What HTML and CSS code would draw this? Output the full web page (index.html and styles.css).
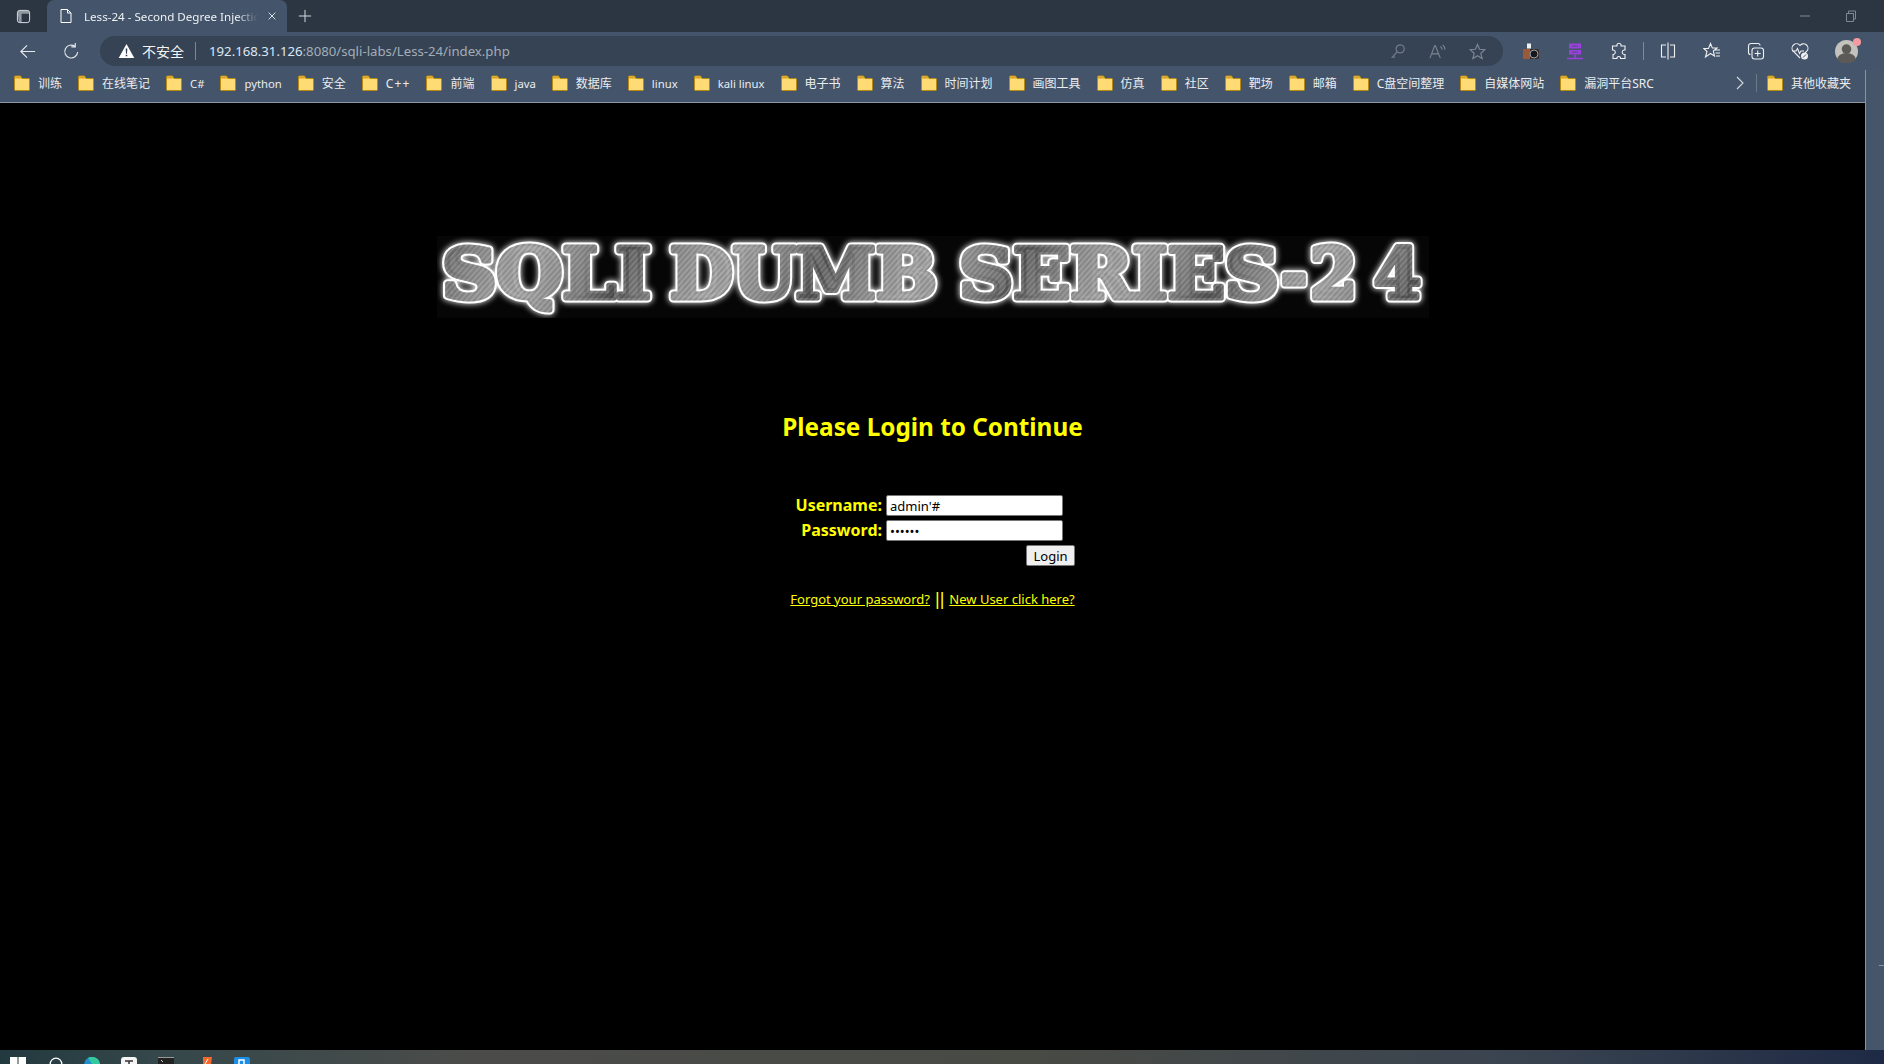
FILE: index.html
```html
<!DOCTYPE html>
<html lang="zh">
<head>
<meta charset="utf-8">
<title>Less-24 - Second Degree Injections</title>
<link rel="stylesheet" href="styles.css">
</head>
<body>
<svg class="defs" width="0" height="0" aria-hidden="true">
  <symbol id="folder" viewBox="0 0 16 16">
    <path d="M.5 3V14.5a1 1 0 0 0 1 1h13a1 1 0 0 0 1-1V4.5a1 1 0 0 0-1-1H8L6.5 1H1.500a1 1 0 0 0-1 1z" fill="#ffdb76" stroke="#b98a12"/>
    <path d="M1 1.500H6.300L7.500 3.500H1z" fill="#d9a520"/>
  </symbol>
  <pattern id="hatch" width="4" height="4" patternUnits="userSpaceOnUse" patternTransform="rotate(-48)">
    <rect width="4" height="4" fill="#8e8e8e"/>
    <rect width="4" height="1" fill="#a2a2a2"/>
    <rect y="2" width="4" height="1" fill="#7c7c7c"/>
  </pattern>
  <linearGradient id="shade" gradientUnits="userSpaceOnUse" x1="0" y1="0" x2="85" y2="35" spreadMethod="reflect">
    <stop offset="0" stop-color="#000" stop-opacity=".25"/>
    <stop offset="1" stop-color="#fff" stop-opacity=".12"/>
  </linearGradient>
</svg>
<div class="tabstrip">
  <svg class="ico sidebar-ico" viewBox="0 0 16 16"><rect x="1.500" y="1.500" width="13" height="13" rx="2.500" fill="none" stroke="#e4e8ec"/><path d="M2 2H14V5H2zM2 5H6V14H3z" fill="#c5ccd3" opacity=".65"/></svg>
  <div class="tab">
    <svg class="ico" viewBox="0 0 16 16"><path d="M3 1.500H9.500L13 5V14.500H3zM9.500 1.500V5H13" fill="none" stroke="#fff"/></svg>
    <span class="tab-title">Less-24 - Second Degree Injections</span>
    <svg class="ico tab-x" viewBox="0 0 16 16"><path d="M3.500 3.500L12.500 12.500M12.500 3.500L3.500 12.500" stroke="#f0f2f4" stroke-width="1.200"/></svg>
  </div>
  <svg class="ico plus" viewBox="0 0 16 16"><path d="M8 1V15M1 8H15" stroke="#d9dde2" stroke-width="1.100"/></svg>
  <div class="winctl">
    <svg class="ico" viewBox="0 0 16 16"><path d="M3 8H13" stroke="#7d8895"/></svg>
    <svg class="ico" viewBox="0 0 16 16"><path d="M3.500 5.500H10.500V13.500H3.500zM5.500 5.500V3H12.500V11H10.500" fill="none" stroke="#7d8895"/></svg>
  </div>
</div>
<div class="toolbar">
  <svg class="ico nav back" viewBox="0 0 20 20"><path d="M18 10H3M9.500 3.500L3 10L9.500 16.500" fill="none" stroke="#e6e9ec" stroke-width="1.200"/></svg>
  <svg class="ico nav reload" viewBox="0 0 20 20"><path d="M16.500 10.500A6.800 6.800 0 1 1 13.800 4.600M14 1V5.200H9.800" fill="none" stroke="#e6e9ec" stroke-width="1.200"/></svg>
  <div class="omnibox">
    <svg class="ico warn" viewBox="0 0 16 16"><path d="M8 1L15.800 15H.2z" fill="#fff"/><path d="M7.200 5.500H8.800L8.500 10.700H7.500zM7.200 11.700H8.800V13.300H7.200z" fill="#2f3b4a"/></svg>
    <span class="insecure">不安全</span>
    <span class="omni-sep"></span>
    <span class="url"><span class="host">192.168.31.126</span>:8080/sqli-labs/Less-24/index.php</span>
    <svg class="ico dim" viewBox="0 0 16 16"><circle cx="10.500" cy="5.500" r="3.800" fill="none" stroke="#6f7b88" stroke-width="1.200"/><path d="M7.800 8.200L2.500 14M4 12.500L5.500 14" fill="none" stroke="#6f7b88" stroke-width="1.200"/></svg>
    <svg class="ico dim" viewBox="0 0 18 16"><path d="M1 15L6 2H6.800L12 15M3 10.500H10M12 2.500A5 5 0 0 1 14 6M14.500 1A7 7 0 0 1 17 6" fill="none" stroke="#7d8894" stroke-width="1.100"/></svg>
    <svg class="ico dim" viewBox="0 0 18 18"><path d="M9 1.500L11.200 6.700L16.800 7.200L12.500 10.900L13.900 16.500L9 13.500L4.100 16.500L5.500 10.900L1.200 7.200L6.800 6.700z" fill="none" stroke="#7d8894" stroke-width="1.200"/></svg>
  </div>
  <div class="tools">
    <svg class="ico" viewBox="0 0 18 18"><rect x="1" y="7" width="16" height="10" rx="1.500" fill="#3b2a23"/><rect x="1" y="7" width="7" height="10" fill="#9a5a3a"/><circle cx="12" cy="12" r="4" fill="#14181c" stroke="#9aa3ab"/><path d="M5 6.500V1.500H9V6.500z" fill="#eef0f2"/></svg>
    <svg class="ico" viewBox="0 0 18 18"><path d="M3 1.500H15V6.500H3zM3 8H15V12.500H3z" fill="#9b3fe0"/><path d="M1 16.500H17M9 12.500V16.500" stroke="#9b3fe0" stroke-width="1.500"/><path d="M6 4H12M6 10H12" stroke="#45566b"/></svg>
    <svg class="ico" viewBox="0 0 18 18"><path d="M7 2.500A2.200 2.200 0 0 1 11 2.500V4H15V8H14A2.300 2.300 0 0 0 14 12.500H15V16.500H10.500V15.500A2 2 0 0 0 7 15.500V16.500H3V12.500H3.500A2.300 2.300 0 0 0 3.500 8H2.500V4H7z" fill="none" stroke="#eef0f2" stroke-width="1.100"/></svg>
    <span class="tool-sep"></span>
    <svg class="ico" viewBox="0 0 18 18"><path d="M9 .5V17.500M7 3H2.500V15H7M11 3H15.500V15H11" fill="none" stroke="#eef0f2" stroke-width="1.100"/></svg>
    <svg class="ico" viewBox="0 0 18 18"><path d="M7.500 1.500L9.300 6H14L10.300 9L11.500 14L7.500 11.500L2.500 15L4 9.500L.8 6.500H5.500zM12 8H17M12.500 11H17M13 14H17" fill="none" stroke="#eef0f2" stroke-width="1.100"/></svg>
    <svg class="ico" viewBox="0 0 18 18"><path d="M3.500 12.500A2 2 0 0 1 1.500 10.500V4A2.500 2.500 0 0 1 4 1.500H11A2 2 0 0 1 13 3.500" fill="none" stroke="#eef0f2" stroke-width="1.100"/><rect x="5" y="6" width="11.500" height="11" rx="2.500" fill="none" stroke="#eef0f2" stroke-width="1.100"/><path d="M10.700 8.500V14.500M7.700 11.500H13.700" stroke="#eef0f2" stroke-width="1.100"/></svg>
    <svg class="ico" viewBox="0 0 18 18"><path d="M9 16L2 9A4.200 4.200 0 0 1 9 3.500A4.200 4.200 0 0 1 16 9L14 11M1 9H5L6.500 6.500L8.500 11.500L10 9H13" fill="none" stroke="#eef0f2" stroke-width="1.100"/><circle cx="13.500" cy="14" r="3.500" fill="#eef0f2"/><path d="M12 15.500L15 12.500" stroke="#45566b"/></svg>
    <div class="avatar"><svg viewBox="0 0 24 24"><circle cx="12" cy="12" r="12" fill="#c4c2bd"/><circle cx="12" cy="9.500" r="5" fill="#5c5a57"/><path d="M2.500 20A9.500 6.500 0 0 1 21.500 20A12 12 0 0 1 2.500 20z" fill="#5c5a57"/></svg><span class="dot"></span></div>
  </div>
</div>
<div class="bookmarks">
  <a class="bm"><svg class="folder"><use href="#folder"/></svg>训练</a>
  <a class="bm"><svg class="folder"><use href="#folder"/></svg>在线笔记</a>
  <a class="bm lat"><svg class="folder"><use href="#folder"/></svg>C#</a>
  <a class="bm lat"><svg class="folder"><use href="#folder"/></svg>python</a>
  <a class="bm"><svg class="folder"><use href="#folder"/></svg>安全</a>
  <a class="bm wide"><svg class="folder"><use href="#folder"/></svg>C++</a>
  <a class="bm"><svg class="folder"><use href="#folder"/></svg>前端</a>
  <a class="bm lat"><svg class="folder"><use href="#folder"/></svg>java</a>
  <a class="bm"><svg class="folder"><use href="#folder"/></svg>数据库</a>
  <a class="bm lat"><svg class="folder"><use href="#folder"/></svg>linux</a>
  <a class="bm lat"><svg class="folder"><use href="#folder"/></svg>kali linux</a>
  <a class="bm"><svg class="folder"><use href="#folder"/></svg>电子书</a>
  <a class="bm"><svg class="folder"><use href="#folder"/></svg>算法</a>
  <a class="bm"><svg class="folder"><use href="#folder"/></svg>时间计划</a>
  <a class="bm"><svg class="folder"><use href="#folder"/></svg>画图工具</a>
  <a class="bm"><svg class="folder"><use href="#folder"/></svg>仿真</a>
  <a class="bm"><svg class="folder"><use href="#folder"/></svg>社区</a>
  <a class="bm"><svg class="folder"><use href="#folder"/></svg>靶场</a>
  <a class="bm"><svg class="folder"><use href="#folder"/></svg>邮箱</a>
  <a class="bm"><svg class="folder"><use href="#folder"/></svg>C盘空间整理</a>
  <a class="bm"><svg class="folder"><use href="#folder"/></svg>自媒体网站</a>
  <a class="bm"><svg class="folder"><use href="#folder"/></svg>漏洞平台SRC</a>
  <div class="bm-end">
    <svg class="ico chev" viewBox="0 0 10 16"><path d="M2 2L8 8L2 14" fill="none" stroke="#d5dadf" stroke-width="1.100"/></svg>
    <span class="bm-sep"></span>
    <a class="bm"><svg class="folder"><use href="#folder"/></svg>其他收藏夹</a>
  </div>
</div>
<div class="viewport">
  <main class="page">
    <svg class="logo" viewBox="0 0 992 82" role="img" aria-label="SQLI DUMB SERIES-24">
      <defs>
        <g id="logoWords" class="logo-text">
          <text x="5" y="62" textLength="209" lengthAdjust="spacingAndGlyphs">SQLI</text>
          <text x="233" y="62" textLength="267" lengthAdjust="spacingAndGlyphs">DUMB</text>
          <text x="522" y="62" textLength="320" lengthAdjust="spacingAndGlyphs">SERIES</text>
          <text x="844" y="62" textLength="26" lengthAdjust="spacingAndGlyphs">-</text>
          <text x="873" y="62" textLength="47" lengthAdjust="spacingAndGlyphs">2</text>
          <text x="937" y="62" textLength="47" lengthAdjust="spacingAndGlyphs">4</text>
        </g>
      </defs>
      <use href="#logoWords" class="logo-glow" fill="#fff" stroke="#fff" stroke-width="9" stroke-linejoin="round"/>
      <use href="#logoWords" fill="url(#hatch)" stroke="url(#hatch)" stroke-width="5" stroke-linejoin="round"/>
      <use href="#logoWords" fill="url(#shade)" stroke="url(#shade)" stroke-width="5" stroke-linejoin="round"/>
    </svg>
    <h1 class="heading">Please Login to Continue</h1>
    <form class="login">
      <label class="lbl" for="u">Username:</label>
      <input class="field" id="u" type="text" value="admin'#">
      <label class="lbl" for="p">Password:</label>
      <input class="field" id="p" type="password" value="123456">
      <button class="btn" type="button">Login</button>
    </form>
    <p class="links"><a href="#">Forgot your password?</a><span class="pipes">||</span><a href="#">New User click here?</a></p>
  </main>
  <div class="scrollbar"><span class="tick"></span></div>
</div>
<div class="taskbar">
  <svg class="tb tb-win" viewBox="0 0 16 16"><path d="M0 0H7.500V7.500H0zM8.500 0H16V7.500H8.500zM0 8.500H7.500V16H0zM8.500 8.500H16V16H8.500z" fill="#fff"/></svg>
  <svg class="tb tb-search" viewBox="0 0 16 16"><circle cx="7" cy="7" r="5.800" fill="none" stroke="#fff" stroke-width="1.300"/></svg>
  <svg class="tb tb-edge" viewBox="0 0 16 16"><circle cx="8" cy="8" r="8" fill="#1f8fd0"/><path d="M4 1A8 8 0 0 1 16 7H8z" fill="#35c9a0"/></svg>
  <svg class="tb tb-app" viewBox="0 0 16 16"><rect width="16" height="16" rx="3" fill="#f4f4f4"/><path d="M4 4H12M8 4V12" stroke="#333" stroke-width="1.500"/></svg>
  <svg class="tb tb-term" viewBox="0 0 16 16"><rect width="16" height="16" fill="#222"/><path d="M0 .5H16" stroke="#999"/><path d="M3 3L5 5" stroke="#ccc"/></svg>
  <svg class="tb tb-burp" viewBox="0 0 16 16"><path d="M3 0H12L10 16H3z" fill="#f4672b"/><path d="M8 2L5 7" stroke="#fff"/></svg>
  <svg class="tb tb-blue" viewBox="0 0 16 16"><rect width="16" height="16" rx="2" fill="#1c8ee6"/><path d="M5 3H10V8H5z" fill="none" stroke="#fff" stroke-width="1.500"/></svg>
</div>
</body>
</html>
```
FILE: styles.css
```css
* { box-sizing: border-box; }
html, body { margin: 0; height: 100%; overflow: hidden; }
body {
  display: flex;
  flex-direction: column;
  width: 1884px;
  height: 1064px;
  background: #000;
  font-family: "Noto Sans", "Noto Sans CJK SC", sans-serif;
}
.defs { position: absolute; }
.ico { display: block; flex: none; width: 16px; height: 16px; }

.tabstrip {
  display: flex;
  align-items: center;
  height: 32px;
  padding-left: 16px;
  background: #2c3643;
}
.sidebar-ico { width: 15px; height: 15px; margin-right: 16px; }
.tab {
  display: flex;
  align-items: center;
  align-self: flex-end;
  width: 240px;
  height: 32px;
  padding: 0 9px 0 11px;
  background: #44546a;
  border-radius: 7px 7px 0 0;
}
.tab-title {
  flex: 1;
  margin-left: 10px;
  font-size: 11.600px;
  color: #eef1f3;
  white-space: nowrap;
  overflow: hidden;
  -webkit-mask-image: linear-gradient(90deg, #000 88%, transparent);
  mask-image: linear-gradient(90deg, #000 88%, transparent);
}
.tab-x { width: 12px; height: 12px; margin-left: 8px; }
.plus { width: 14px; height: 14px; margin-left: 11px; }
.winctl {
  display: flex;
  gap: 30px;
  margin-left: auto;
  margin-right: 25px;
}

.toolbar {
  display: flex;
  align-items: center;
  height: 34px;
  padding: 4px 0 0 18px;
  background: #44546a;
}
.nav { width: 19px; height: 19px; }
.reload { margin-left: 25px; }
.omnibox {
  display: flex;
  align-items: center;
  width: 1403px;
  height: 30px;
  margin-left: 19px;
  padding: 0 17px 0 18px;
  background: #364354;
  border-radius: 15px;
}
.warn { width: 17px; height: 16px; }
.insecure { margin-left: 7px; font-size: 14px; color: #f2f4f6; }
.omni-sep { width: 1px; height: 18px; margin: 0 13px 0 11px; background: #7c8794; }
.url { flex: 1; font-size: 13.200px; color: #a3adb8; white-space: nowrap; }
.host { color: #dbe7f3; }
.dim { width: 17px; height: 17px; margin-left: 23px; }
.tools {
  display: flex;
  align-items: center;
  gap: 26px;
  margin-left: 19px;
}
.tools .ico { width: 18px; height: 18px; }
.tool-sep { width: 1px; height: 18px; margin: 0 -11px 0 -11px; background: #7f8a97; }
.avatar { position: relative; width: 23px; height: 23px; }
.avatar svg { display: block; width: 23px; height: 23px; }
.dot {
  position: absolute;
  top: -2px;
  right: -3px;
  width: 8px;
  height: 8px;
  border-radius: 50%;
  background: #f59aa0;
}

.bookmarks {
  display: flex;
  align-items: center;
  height: 37px;
  padding: 0 0 2px 14px;
  gap: 16px;
  background: #44546a;
  border-bottom: 1px solid #8a96a4;
}
.bm {
  display: flex;
  align-items: center;
  gap: 8px;
  flex: none;
  font-size: 12px;
  color: #e9edf0;
  white-space: nowrap;
}
.lat { font-size: 11.300px; }
.wide { letter-spacing: 1.100px; }
.folder { flex: none; width: 16px; height: 16px; }
.bm-end {
  display: flex;
  align-items: center;
  margin-left: auto;
  padding-right: 33px;
}
.chev { width: 10px; height: 16px; }
.bm-sep { width: 1px; height: 18px; margin: 0 10px 0 11px; background: #6b7988; }

.viewport { flex: 1; display: flex; min-height: 0; }
.page {
  flex: 1;
  display: flex;
  flex-direction: column;
  align-items: center;
  padding-top: 133px;
  background: #000;
}
.logo {
  display: block;
  flex: none;
  width: 992px;
  height: 82px;
  background: #060606;
}
.logo-text {
  font-family: "DejaVu Serif", serif;
  font-weight: 700;
  font-size: 70px;
}
.logo-glow { filter: drop-shadow(0 0 3px #fff); }
.heading {
  margin: 91px 0 0;
  font-size: 24.300px;
  line-height: 36px;
  font-weight: 700;
  color: #ff0;
}
.login {
  display: grid;
  grid-template-columns: 92px 189px;
  column-gap: 4px;
  row-gap: 4px;
  align-items: center;
  margin-top: 50px;
}
.lbl {
  font-size: 16px;
  font-weight: 700;
  line-height: 21px;
  color: #ff0;
  text-align: right;
  white-space: nowrap;
}
.field {
  width: 177px;
  height: 21px;
  padding: 0 3px;
  border: 1px solid #767676;
  border-radius: 2px;
  background: #fff;
  font: 13px "Noto Sans", sans-serif;
  color: #000;
}
.btn {
  grid-column: 2;
  justify-self: end;
  width: 49px;
  height: 21px;
  padding: 0;
  border: 1px solid #767676;
  border-radius: 2px;
  background: #efefef;
  font: 13px "Noto Sans", sans-serif;
  color: #000;
}
.links {
  display: flex;
  align-items: center;
  margin: 23px 0 0;
  font-size: 13px;
  line-height: 20px;
  color: #ff0;
}
.links a { color: #ff0; }
.pipes { margin: 0 5px; font-family: "Liberation Sans", sans-serif; font-size: 18px; }

.scrollbar {
  position: relative;
  flex: none;
  width: 19px;
  margin-top: -33px;
  background: #45566b;
  border-left: 1px solid #8c939b;
}
.tick {
  position: absolute;
  right: 0;
  bottom: 84px;
  width: 5px;
  height: 1px;
  background: #8a95a2;
}

.taskbar {
  display: flex;
  flex: none;
  height: 14px;
  overflow: hidden;
  padding-top: 7px;
  background: linear-gradient(90deg, #22393f 0, #34474a 8%, #4b4c4a 25%, #484a44 55%, #3a4450 80%, #1e2a45 100%);
}
.tb { display: block; flex: none; width: 16px; height: 16px; }
.tb-win { margin-left: 10px; }
.tb-search { margin-left: 23px; }
.tb-edge { margin-left: 19px; }
.tb-app { margin-left: 21px; }
.tb-term { margin-left: 21px; }
.tb-burp { margin-left: 26px; }
.tb-blue { margin-left: 18px; }
```
